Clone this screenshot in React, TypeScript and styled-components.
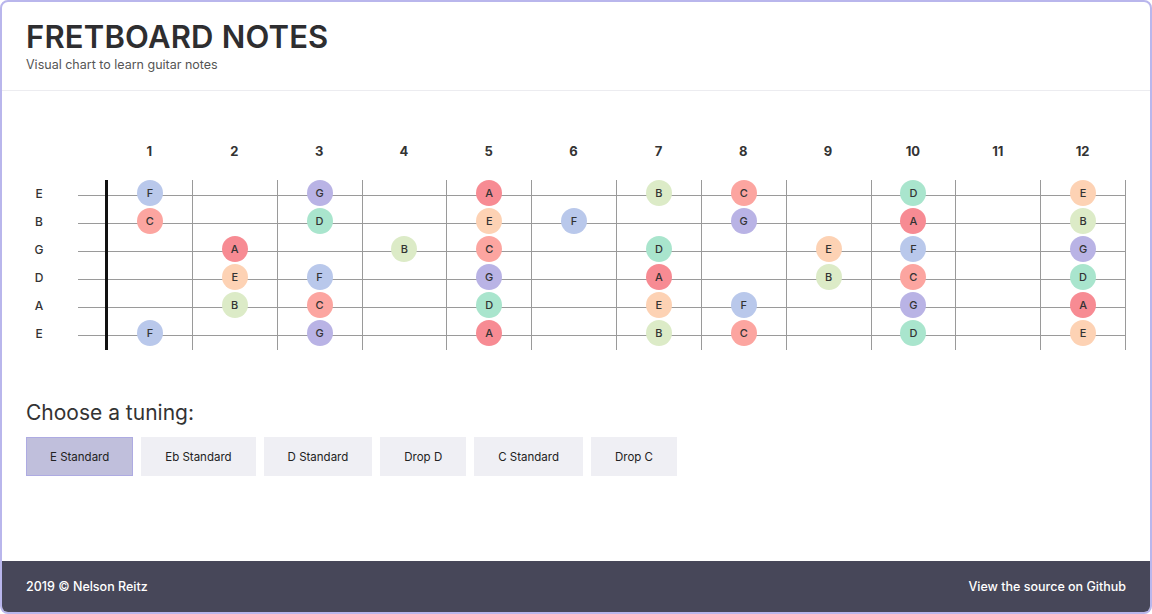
import styled, { createGlobalStyle } from 'styled-components';
import { useState } from 'react';

const CHROMATIC = ['A', 'A#', 'B', 'C', 'C#', 'D', 'D#', 'E', 'F', 'F#', 'G', 'G#'];

const NOTE_COLORS: Record<string, string> = {
  A: '#f78b93',
  B: '#dcebc7',
  C: '#fca5a0',
  D: '#a9e5cd',
  E: '#fdd2b4',
  F: '#b9c8eb',
  G: '#b9b3e5',
};

type Tuning = { name: string; strings: string[] };

const TUNINGS: Tuning[] = [
  { name: 'E Standard', strings: ['E', 'B', 'G', 'D', 'A', 'E'] },
  { name: 'Eb Standard', strings: ['D#', 'A#', 'F#', 'C#', 'G#', 'D#'] },
  { name: 'D Standard', strings: ['D', 'A', 'F', 'C', 'G', 'D'] },
  { name: 'Drop D', strings: ['E', 'B', 'G', 'D', 'A', 'D'] },
  { name: 'C Standard', strings: ['C', 'G', 'D#', 'A#', 'F', 'C'] },
  { name: 'Drop C', strings: ['D', 'A', 'F', 'C', 'G', 'C'] },
];

const FLAT_NAMES: Record<string, string> = { 'A#': 'Bb', 'C#': 'Db', 'D#': 'Eb', 'F#': 'Gb', 'G#': 'Ab' };

const FRETS = Array.from({ length: 12 }, (_, i) => i + 1);

const noteAt = (open: string, fret: number) =>
  CHROMATIC[(CHROMATIC.indexOf(open) + fret) % 12];

const GlobalStyle = createGlobalStyle`
  html, body {
    margin: 0;
    padding: 0;
    background: #fff;
  }

  body {
    font-family: Inter, 'Noto Sans', 'Liberation Sans', sans-serif;
    color: #333;
  }

  * {
    box-sizing: border-box;
  }
`;

export default function App() {
  const [active, setActive] = useState(0);
  const tuning = TUNINGS[active];

  return (
    <>
      <GlobalStyle />
      <Frame>
        <Header>
          <Title>FRETBOARD NOTES</Title>
          <Subtitle>Visual chart to learn guitar notes</Subtitle>
        </Header>

        <Main>
          <Fretboard>
            <NumberRow>
              <span />
              <span />
              <span />
              <span />
              {FRETS.map((fret) => (
                <FretNumber key={fret}>{fret}</FretNumber>
              ))}
            </NumberRow>

            {tuning.strings.map((open, i) => (
              <StringRow key={i}>
                <StringLabel>{FLAT_NAMES[open] ?? open}</StringLabel>
                <span />
                <OpenString />
                <Nut />
                {FRETS.map((fret) => {
                  const note = noteAt(open, fret);
                  const natural = note.length === 1;
                  return (
                    <FretCell key={fret}>
                      {natural && <Note $color={NOTE_COLORS[note]}>{note}</Note>}
                    </FretCell>
                  );
                })}
              </StringRow>
            ))}
          </Fretboard>

          <TuningSection>
            <TuningTitle>Choose a tuning:</TuningTitle>
            <TuningList>
              {TUNINGS.map((t, i) => (
                <TuningButton key={t.name} $active={i === active} onClick={() => setActive(i)}>
                  {t.name}
                </TuningButton>
              ))}
            </TuningList>
          </TuningSection>
        </Main>

        <Footer>
          <span>2019 © Nelson Reitz</span>
          <FooterLink href="#">View the source on Github</FooterLink>
        </Footer>
      </Frame>
    </>
  );
}

const Frame = styled.div`
  height: 100vh;
  display: flex;
  flex-direction: column;
  border: 2px solid #b9b6ec;
  border-radius: 8px;
  overflow: hidden;
`;

const Header = styled.header`
  padding: 16px 24px 16px;
  border-bottom: 1px solid #ececf0;
`;

const Title = styled.h1`
  margin: 0;
  font-size: 31px;
  line-height: 37px;
  font-weight: 600;
  letter-spacing: 0.2px;
  color: #2e2e30;
`;

const Subtitle = styled.p`
  margin: 1px 0 0;
  font-size: 12.5px;
  line-height: 18px;
  color: #555;
`;

const Main = styled.main`
  flex: 1;
  padding: 0 24px;
`;

const Fretboard = styled.section`
  padding-top: 50px;
`;

const columns = `
  display: grid;
  grid-template-columns: 26px 26px 27px 3px repeat(12, 1fr);
`;

const NumberRow = styled.div`
  ${columns}
  height: 20px;
  margin-bottom: 19px;
  align-items: center;
`;

const FretNumber = styled.span`
  text-align: center;
  font-size: 13px;
  font-weight: 700;
  color: #333;
  transform: translateX(-1px);
`;

const StringRow = styled.div`
  ${columns}
  height: 28px;

  &:last-child {
    height: 30px;
  }
`;

const StringLabel = styled.span`
  height: 26px;
  display: flex;
  align-items: center;
  justify-content: center;
  font-size: 12px;
  font-weight: 500;
  color: #333;
`;

const stringLine = `
  background: linear-gradient(#9a9a9a, #9a9a9a) 0 15px / 100% 1px no-repeat;
`;

const OpenString = styled.div`
  ${stringLine}
`;

const Nut = styled.div`
  background: #111;
`;

const FretCell = styled.div`
  ${stringLine}
  border-right: 1px solid #9a9a9a;
  display: flex;
  justify-content: center;
  align-items: flex-start;
`;

const Note = styled.span<{ $color: string }>`
  width: 26px;
  height: 26px;
  border-radius: 50%;
  background: ${(p) => p.$color};
  display: flex;
  align-items: center;
  justify-content: center;
  font-size: 11px;
  font-weight: 500;
  color: #333;
`;

const TuningSection = styled.section`
  padding-top: 50px;
`;

const TuningTitle = styled.h2`
  margin: 0 0 11px;
  font-size: 21px;
  line-height: 26px;
  font-weight: 400;
  color: #333;
`;

const TuningList = styled.div`
  display: flex;
  gap: 8px;
`;

const TuningButton = styled.button<{ $active: boolean }>`
  height: 39px;
  padding: 0 23px;
  border: 1px solid ${(p) => (p.$active ? '#aeabe2' : '#efeff4')};
  background: ${(p) => (p.$active ? '#c0bfdc' : '#efeff4')};
  font-family: inherit;
  font-size: 11.5px;
  font-weight: 400;
  color: #222;
  cursor: pointer;

  &:hover {
    background: ${(p) => (p.$active ? '#c0bfdc' : '#e4e4ee')};
  }
`;

const Footer = styled.footer`
  height: 51px;
  padding: 0 24px;
  display: flex;
  align-items: center;
  justify-content: space-between;
  background: #474759;
  color: #fff;
  font-size: 12.5px;
  font-weight: 500;
`;

const FooterLink = styled.a`
  color: #fff;
  text-decoration: none;
`;
